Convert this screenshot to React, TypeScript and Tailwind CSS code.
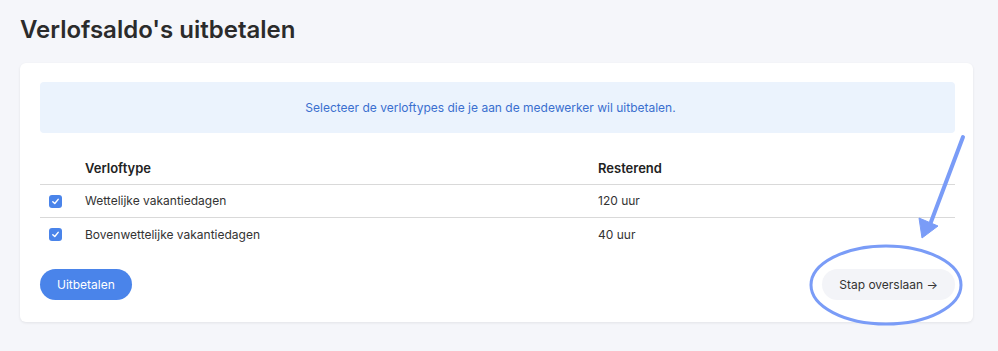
const rows = [
  { type: "Wettelijke vakantiedagen", left: "120 uur" },
  { type: "Bovenwettelijke vakantiedagen", left: "40 uur" },
]

function Check() {
  return (
    <div className="w-[13px] h-[13px] rounded-[3px] bg-[#4a84ea] flex items-center justify-center">
      <svg width="9" height="9" viewBox="0 0 10 10" fill="none">
        <path d="M2 5.2 L4.2 7.3 L8 2.6" stroke="white" strokeWidth="1.6" strokeLinecap="round" strokeLinejoin="round" />
      </svg>
    </div>
  )
}

export default function App() {
  return (
    <div className="relative w-[998px] h-[351px] bg-[#f5f6fa] px-5 pt-3.5 font-['Inter',sans-serif] text-[#333]">
      <h1 className="text-2xl leading-8 font-semibold text-[#2b2b2b]">Verlofsaldo's uitbetalen</h1>

      <div className="mt-[17px] w-[953px] bg-white rounded-md shadow-[0_1px_3px_rgba(0,0,0,0.08)] pl-5 pr-[18px] pt-[19px] pb-[22px]">
        <div className="h-[51px] rounded bg-[#ebf3fd] flex items-center justify-center pr-[14px] text-xs text-[#3a6fcf]">
          Selecteer de verloftypes die je aan de medewerker wil uitbetalen.
        </div>

        <div className="mt-5 text-xs">
          <div className="grid grid-cols-[45px_513px_1fr] h-8 items-center border-b border-[#d9d9d9] font-semibold text-[13px] text-[#222]">
            <div />
            <div>Verloftype</div>
            <div>Resterend</div>
          </div>
          {rows.map((r, i) => (
            <div
              key={r.type}
              className={"grid grid-cols-[45px_513px_1fr] h-[33px] items-center" + (i === 0 ? " border-b border-[#d9d9d9]" : "")}
            >
              <div className="pl-[9px]">
                <Check />
              </div>
              <div>{r.type}</div>
              <div>{r.left}</div>
            </div>
          ))}
        </div>

        <div className="mt-[18px] flex items-center justify-between">
          <button className="h-[31px] px-[17px] rounded-full bg-[#4a84ea] text-white text-xs">Uitbetalen</button>
          <button className="h-[31px] px-[17px] rounded-full bg-[#f3f4f8] text-[#333] text-xs">
            Stap overslaan →
          </button>
        </div>
      </div>

      <svg className="absolute left-0 top-0 pointer-events-none" width="998" height="351" viewBox="0 0 998 351" fill="none">
        <ellipse cx="886" cy="285" rx="75" ry="39" stroke="#7a9cf7" strokeWidth="3" />
        <line x1="963" y1="137" x2="931" y2="222" stroke="#7a9cf7" strokeWidth="4" strokeLinecap="round" />
        <path d="M922 238 L919 218 L938 226 Z" fill="#7a9cf7" stroke="#7a9cf7" strokeWidth="1" strokeLinejoin="round" />
      </svg>
    </div>
  )
}
